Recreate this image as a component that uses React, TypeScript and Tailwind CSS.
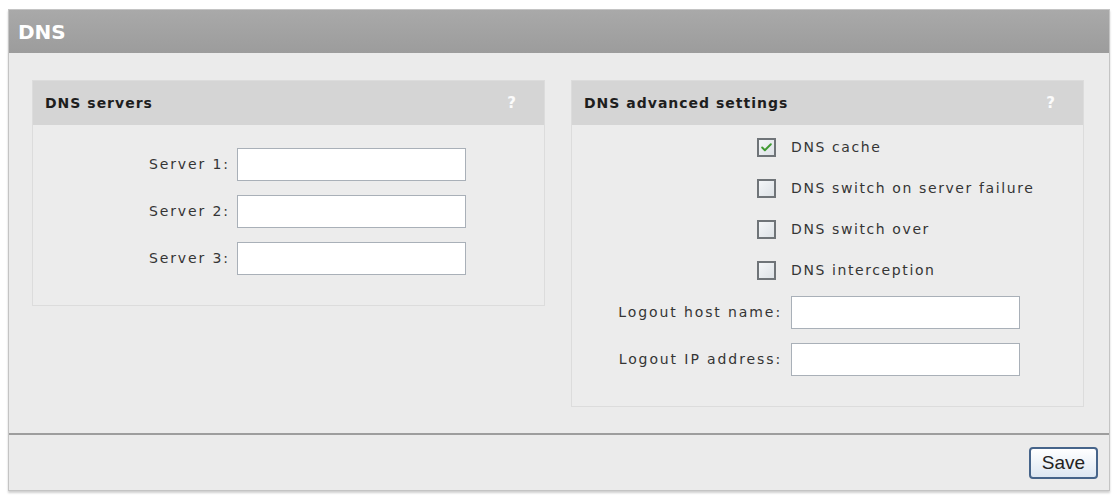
import { Check } from 'lucide-react'

const font = { fontFamily: '"DejaVu Sans", Verdana, sans-serif' }

function Panel({
  title,
  children,
}: {
  title: string
  children: React.ReactNode
}) {
  return (
    <section className="w-[513px] border border-[#dcdcdc] bg-[#ececec]">
      <div className="flex h-[44px] items-center justify-between bg-[#d5d5d5] pr-[28px] pl-[12px]">
        <h2 className="text-[14px] font-bold tracking-[1px] text-[#1e1e1e]">{title}</h2>
        <span className="text-[15px] font-bold text-white/90">?</span>
      </div>
      {children}
    </section>
  )
}

function Field({ label, labelWidth }: { label: string; labelWidth: string }) {
  return (
    <div className="flex items-center">
      <label
        className={`${labelWidth} shrink-0 text-right text-[14px] tracking-[1.9px] text-[#353535]`}
      >
        {label}
      </label>
      <input
        type="text"
        className="h-[33px] w-[229px] border border-[#a9b0b8] bg-white outline-none"
      />
    </div>
  )
}

function Checkbox({ label, checked }: { label: string; checked?: boolean }) {
  return (
    <div className="flex h-[30px] items-center gap-[15px] pl-[185px]">
      <span className="flex h-[19px] w-[19px] items-center justify-center border-2 border-[#6f7478] bg-gradient-to-br from-[#f4f6f8] to-[#dde2e6]">
        {checked && <Check size={13} strokeWidth={3.5} className="text-[#3f9a32]" />}
      </span>
      <span className="text-[14px] tracking-[1.6px] text-[#353535]">{label}</span>
    </div>
  )
}

export default function App() {
  return (
    <div className="min-h-[495px] bg-white pt-[9px] pl-[8px]" style={font}>
      <div className="w-[1102px] border border-[#c4c4c4] bg-[#ebebeb] shadow-[0_2px_2px_#d0d0d0]">
        <header className="flex h-[43px] items-center bg-gradient-to-b from-[#a9a9a9] to-[#9c9c9c] px-[9px]">
          <h1 className="text-[20px] font-bold text-white">DNS</h1>
        </header>

        <div className="flex items-start gap-[26px] px-[23px] pt-[27px] pb-[26px]">
          <Panel title="DNS servers">
            <div className="flex flex-col gap-[14px] pt-[23px] pb-[30px]">
              <Field label="Server 1:" labelWidth="w-[204px] pr-[7px]" />
              <Field label="Server 2:" labelWidth="w-[204px] pr-[7px]" />
              <Field label="Server 3:" labelWidth="w-[204px] pr-[7px]" />
            </div>
          </Panel>

          <Panel title="DNS advanced settings">
            <div className="flex flex-col pt-[7px] pb-[30px]">
              <div className="flex flex-col gap-[11px]">
                <Checkbox label="DNS cache" checked />
                <Checkbox label="DNS switch on server failure" />
                <Checkbox label="DNS switch over" />
                <Checkbox label="DNS interception" />
              </div>
              <div className="mt-[11px] flex flex-col gap-[14px]">
                <Field label="Logout host name:" labelWidth="w-[219px] pr-[9px]" />
                <Field label="Logout IP address:" labelWidth="w-[219px] pr-[9px]" />
              </div>
            </div>
          </Panel>
        </div>

        <footer className="flex h-[57px] items-center justify-end border-t-2 border-[#9d9d9d] pr-[11px]">
          <button
            className="h-[32px] w-[69px] rounded-[4px] border-2 border-[#46648a] bg-gradient-to-b from-white to-[#dde7f2] text-[19px] text-[#222]"
            style={{ fontFamily: '"Liberation Sans", Arial, sans-serif' }}
          >
            Save
          </button>
        </footer>
      </div>
    </div>
  )
}
